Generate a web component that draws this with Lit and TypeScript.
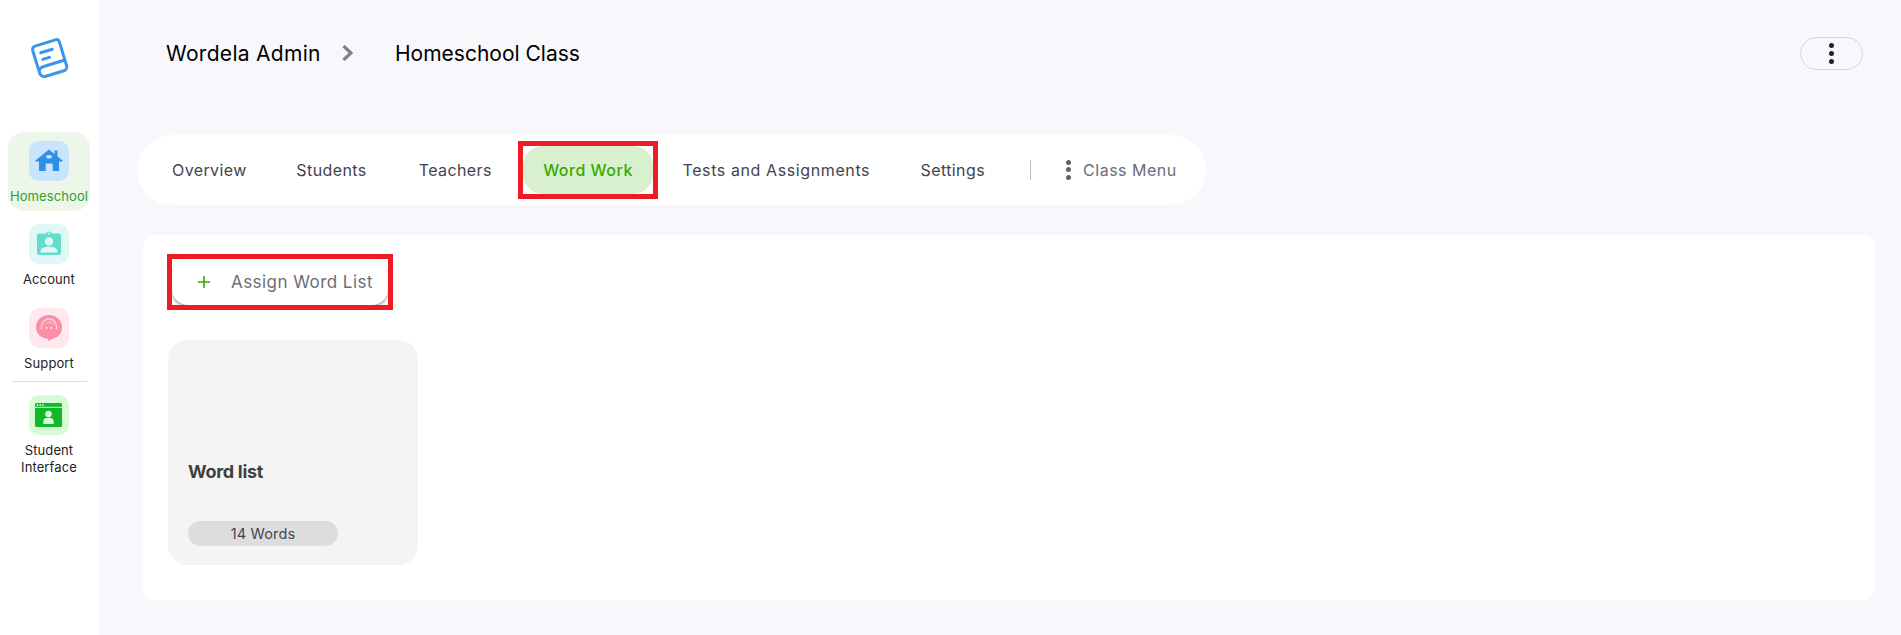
import { LitElement, html, css, svg } from "lit";
import { customElement } from "lit/decorators.js";

const homeIcon = svg`<svg width="40" height="40" viewBox="0 0 40 40"><path fill="#2f8fe6" d="M6.500 19.500 20 8.500l5.500 4.500V9.500h3v6l5 4v1H30V30h-6.300v-7.500h-7V30H10V20.500H6.500z"/><ellipse cx="20" cy="15.700" rx="3" ry="1.800" fill="#c9e4fd"/></svg>`;
const accountIcon = svg`<svg width="40" height="40" viewBox="0 0 40 40"><path fill="#63dccb" d="M10 9.500h7.300a2.800 2.800 0 0 1 5.400 0H30a2 2 0 0 1 2 2V29a2 2 0 0 1-2 2H10a2 2 0 0 1-2-2V11.500a2 2 0 0 1 2-2z"/><circle cx="20" cy="9.500" r="1" fill="#dff8f5"/><circle cx="20" cy="17.500" r="4.200" fill="#dff8f5"/><path fill="#dff8f5" d="M11.500 28.500v-1c0-3.500 4-4.800 8.500-4.800s8.500 1.300 8.500 4.800v1z"/></svg>`;
const supportIcon = svg`<svg width="40" height="40" viewBox="0 0 40 40"><path fill="#fb8fa8" d="M20 7c7.500 0 13 5 13 12.300 0 6.600-4.500 11-10.500 11.700l-1.500 1.500-1.500.5-.3-2C12 30.500 7 26 7 19.300 7 12 12.500 7 20 7z"/><path fill="none" stroke="#ffd3de" stroke-width="1.300" d="M12.500 21.500v-3a7.500 7.500 0 0 1 15 0v3"/><path fill="none" stroke="#ffd3de" stroke-width=".8" d="M15.500 16.500a5.500 5.500 0 0 1 9 0"/><circle cx="17.800" cy="20" r="1" fill="#ffe9ee"/><circle cx="22.200" cy="20" r="1" fill="#ffe9ee"/></svg>`;
const studentIcon = svg`<svg width="40" height="40" viewBox="0 0 40 40"><rect x="6" y="8" width="27" height="24" rx="1.500" fill="#10b82a"/><rect x="6" y="11.800" width="27" height="1" fill="#d6fbd6"/><g fill="#d6fbd6"><circle cx="8.500" cy="10" r=".9"/><circle cx="11.200" cy="10" r=".9"/><circle cx="13.900" cy="10" r=".9"/><circle cx="19.500" cy="19" r="3.300"/><path d="M14.300 29v-2.700c0-2.500 2-3.600 5.200-3.600s5.200 1.100 5.200 3.600V29z"/></g></svg>`;

const nav = [
  { label: "Homeschool", cls: "active", tile: "home", icon: homeIcon },
  { label: "Account", cls: "mid", tile: "acct", icon: accountIcon },
  { label: "Support", cls: "", tile: "supp", icon: supportIcon },
];

const tabsA = [
  { t: "Overview", w: 74, m: 50 },
  { t: "Students", w: 71, m: 51 },
  { t: "Teachers", w: 74.5, m: 25.5 },
];

@customElement("app-root")
export class AppRoot extends LitElement {
  static styles = css`
    :host { display: block; height: 635px; overflow: hidden; background: #f8f8fc; font-family: Inter, "Open Sans", sans-serif; color: #3f3f46; }
    .page { display: flex; height: 635px; }
    .side { width: 99px; flex: none; background: #fff; display: flex; flex-direction: column; align-items: center; padding-top: 35px; box-sizing: border-box; }
    .logo { display: block; margin-bottom: 51px; flex: none; }
    .item { width: 82px; height: 79px; flex: none; box-sizing: border-box; padding-top: 9px; border-radius: 16px; display: flex; flex-direction: column; align-items: center; font-size: 13px; letter-spacing: .1px; color: #222; margin-bottom: 4px; margin-left: -1px; }
    .item.active { background: #edf7e9; color: #2f9e2f; }
    .item.mid { height: 80px; }
    .item.stu { padding-top: 0; height: auto; }
    .tile { width: 40px; height: 40px; border-radius: 10px; flex: none; }
    .home { background: #c9e4fd; } .acct { background: #dff8f5; } .supp { background: #ffe9ee; } .stud { background: #d6fbd6; }
    .tile svg { display: block; }
    .lab { margin-top: 7px; line-height: 17px; text-align: center; white-space: nowrap; }
    .rule { width: 75px; height: 1px; background: #dcdcdc; margin: -1px 0 13px; flex: none; }
    .main { flex: 1; min-width: 0; display: flex; flex-direction: column; padding: 0 26px 0 44px; }
    .top { display: flex; align-items: center; height: 106px; padding-left: 23px; font-size: 21px; color: #000; flex: none; }
    .w1 { width: 155px; letter-spacing: .3px; white-space: nowrap; }
    .chev { margin: 0 42px 0 21px; display: block; }
    .more { margin-left: auto; margin-right: 12px; width: 63px; height: 33px; box-sizing: border-box; border: 1px solid #d5d5d8; border-radius: 17px; display: flex; flex-direction: column; align-items: center; justify-content: center; gap: 3px; }
    .more i { width: 5px; height: 5px; border-radius: 50%; background: #222; }
    .tabs { display: flex; align-items: center; height: 70px; width: 1069px; margin: 29px 0 0 -6px; padding: 0 0 1px 35px; box-sizing: border-box; background: #fff; border-radius: 35px; font-size: 16px; letter-spacing: .4px; color: #3f4450; flex: none; }
    .tab { white-space: nowrap; text-align: center; flex: none; }
    .mark { border: 5px solid #ee1c25; height: 58px; width: 140px; box-sizing: border-box; margin-right: 24.500px; flex: none; }
    .mark span { display: flex; height: 100%; align-items: center; justify-content: center; background: #d8f0cd; border-radius: 20px; color: #36a800; font-weight: 500; letter-spacing: .5px; }
    .tab.tests { width: 187.500px; margin-right: 50.500px; letter-spacing: .6px; }
    .tab.set { width: 64.500px; margin-right: 44.600px; }
    .vr { width: 1px; height: 20px; background: #bdbdbd; margin-right: 35px; flex: none; }
    .vd { display: flex; flex-direction: column; gap: 2.500px; margin-right: 12.500px; flex: none; }
    .vd i { width: 5px; height: 5px; border-radius: 50%; background: #5f6068; }
    .cm { color: #6b6d76; white-space: nowrap; letter-spacing: .5px; }
    .panel { margin-top: 30px; height: 365px; background: #fff; border-radius: 12px; padding: 19px 22px; box-sizing: border-box; flex: none; }
    .mark2 { border: 5px solid #ee1c25; width: 226px; height: 56px; margin-left: 2px; box-sizing: border-box; overflow: hidden; }
    .btn { height: 100%; display: flex; align-items: center; background: #fff; border-radius: 16px; box-shadow: 0 2px 3px rgba(0,0,0,.35); padding-left: 24.500px; font-size: 17px; letter-spacing: .45px; color: #6b6d76; white-space: nowrap; }
    .btn svg { display: block; margin-right: 20.500px; flex: none; }
    .card { margin: 30px 0 0 3px; width: 250px; height: 225px; background: #f4f4f4; border-radius: 20px; padding: 0 20px; box-sizing: border-box; display: flex; flex-direction: column; }
    .title { margin-top: 120px; font-size: 18px; line-height: 24px; font-weight: 700; color: #3f3f3f; letter-spacing: -.3px; }
    .pill { margin-top: 37px; width: 150px; height: 25px; border-radius: 13px; background: #dddddd; display: flex; align-items: center; justify-content: center; font-size: 14.500px; letter-spacing: .15px; color: #44464f; }
  `;

  render() {
    return html`<div class="page">
      <aside class="side">
        <svg class="logo" width="46" height="46" viewBox="0 0 46 46" fill="none" stroke="#3a96e8" stroke-width="3" stroke-linecap="round" stroke-linejoin="round">
          <g transform="translate(1 1) rotate(-17 23 23)">
            <path d="M8 31V9.500A3.500 3.500 0 0 1 11.500 6h22A2.500 2.500 0 0 1 36 8.500V34a4 4 0 0 1-4 4H13a5 5 0 0 1-5-5 5 5 0 0 1 5-5h23"/>
            <path d="M15 14h12M15 21h7"/>
          </g>
        </svg>
        ${nav.map(
          (n) => html`<div class="item ${n.cls}">
            <div class="tile ${n.tile}">${n.icon}</div>
            <div class="lab">${n.label}</div>
          </div>`
        )}
        <div class="rule"></div>
        <div class="item stu">
          <div class="tile stud">${studentIcon}</div>
          <div class="lab">Student<br />Interface</div>
        </div>
      </aside>
      <main class="main">
        <header class="top">
          <span class="w1">Wordela Admin</span>
          <svg class="chev" width="11" height="16" viewBox="0 0 11 16" fill="none" stroke="#808082" stroke-width="3.200"><path d="M1.500 1 9 8l-7.500 7"/></svg>
          <span>Homeschool Class</span>
          <div class="more"><i></i><i></i><i></i></div>
        </header>
        <nav class="tabs">
          ${tabsA.map((t) => html`<span class="tab" style="width:${t.w}px;margin-right:${t.m}px">${t.t}</span>`)}
          <div class="mark"><span>Word Work</span></div>
          <span class="tab tests">Tests and Assignments</span>
          <span class="tab set">Settings</span>
          <div class="vr"></div>
          <div class="vd"><i></i><i></i><i></i></div>
          <span class="cm">Class Menu</span>
        </nav>
        <section class="panel">
          <div class="mark2">
            <div class="btn">
              <svg width="14" height="14" viewBox="0 0 14 14" stroke="#36a800" stroke-width="1.600"><path d="M7 1v12M1 7h12"/></svg>
              Assign Word List
            </div>
          </div>
          <div class="card">
            <div class="title">Word list</div>
            <div class="pill">14 Words</div>
          </div>
        </section>
      </main>
    </div>`;
  }
}
